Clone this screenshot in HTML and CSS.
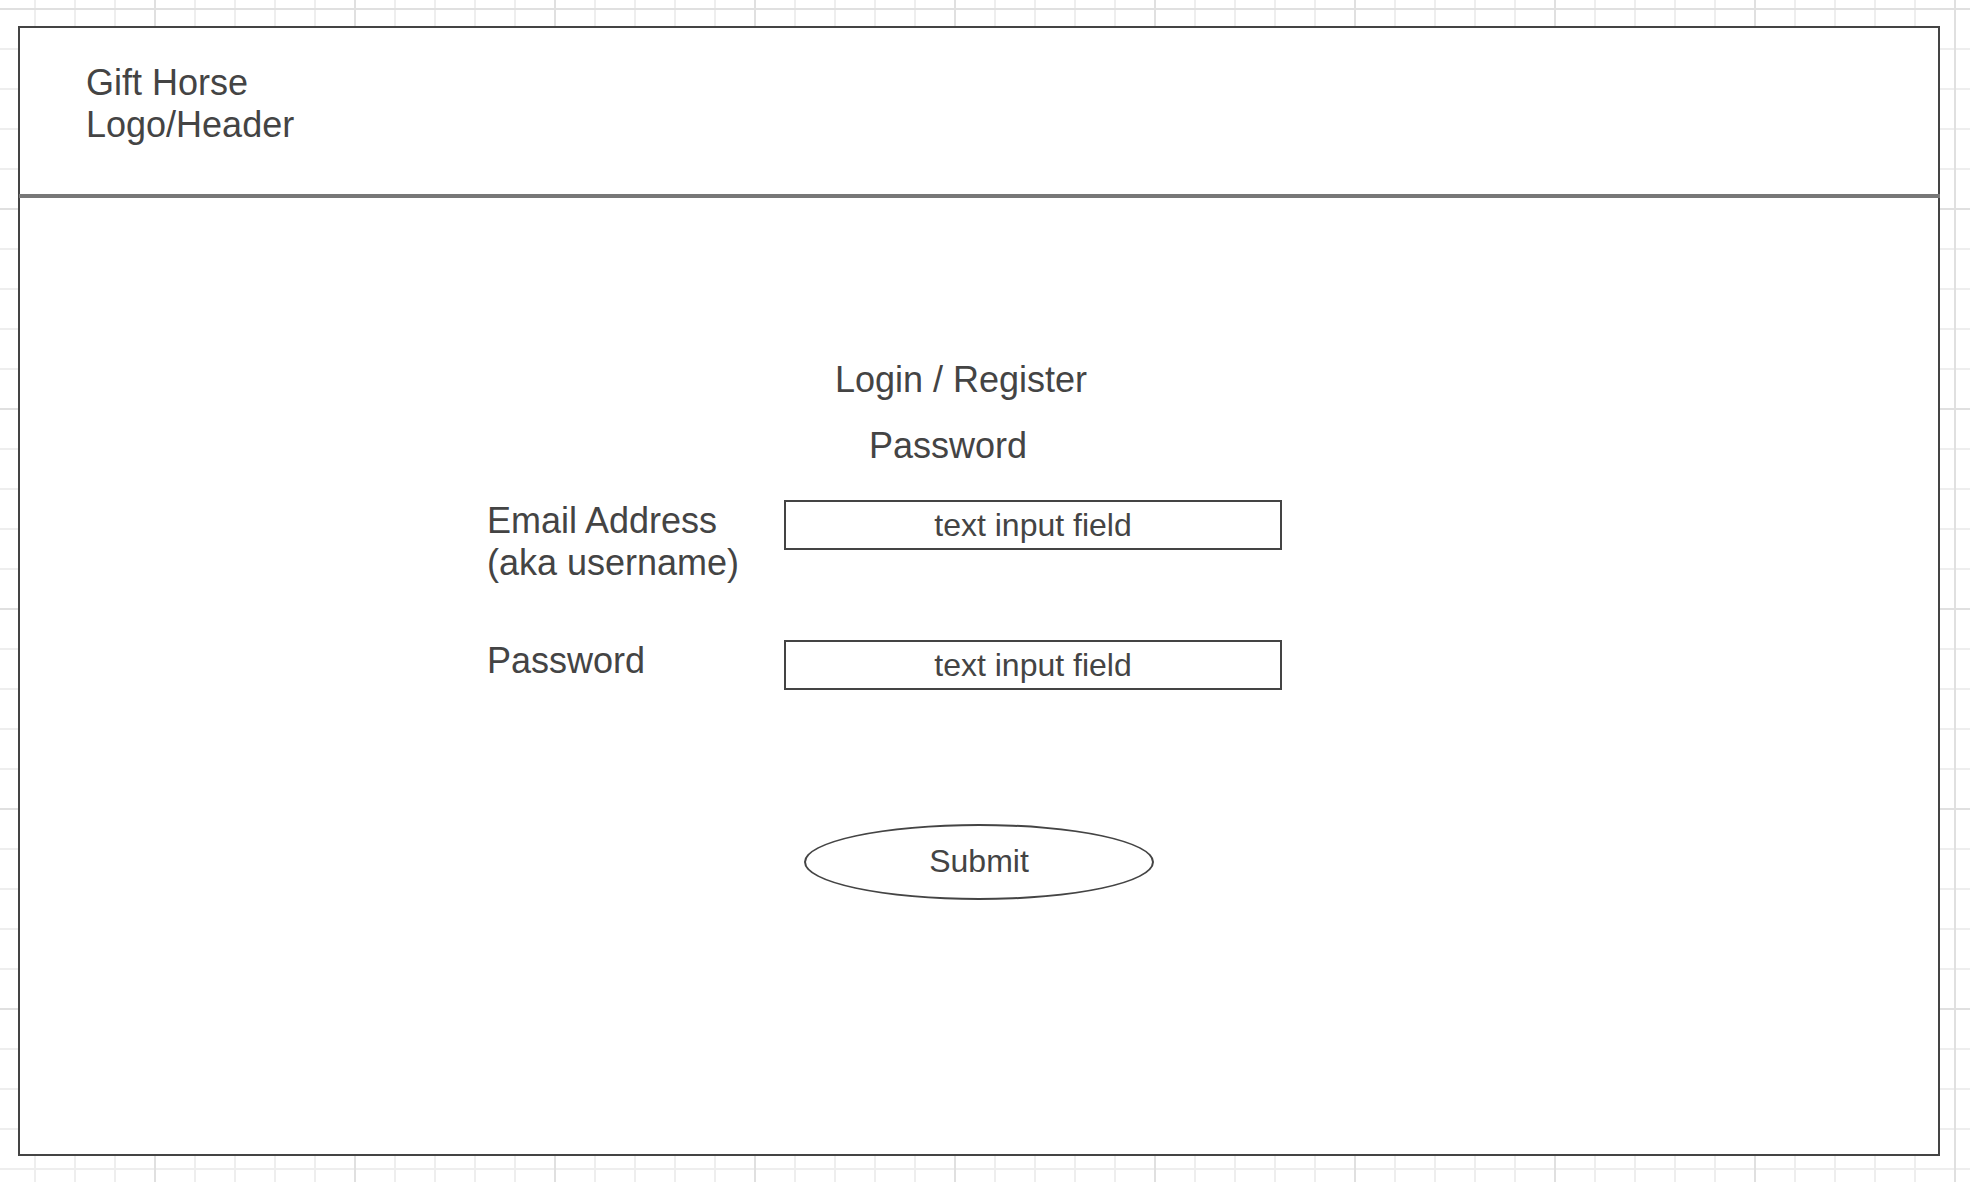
FILE: index.html
```html
<!DOCTYPE html>
<html lang="en">
<head>
<meta charset="utf-8">
<meta name="viewport" content="width=device-width, initial-scale=1">
<title>Gift Horse - Login / Register</title>
<link rel="stylesheet" href="styles.css">
</head>
<body>
<div class="frame">
  <header class="header">
    <div class="logo">Gift Horse<br>Logo/Header</div>
  </header>
  <main class="main">
    <h1 class="title">Login / Register</h1>
    <h2 class="subtitle">Password</h2>
    <form class="form">
      <div class="fields">
        <label class="label" for="email">Email Address<br>(aka username)</label>
        <input class="field" id="email" type="text" placeholder="text input field">
        <label class="label" for="password">Password</label>
        <input class="field" id="password" type="password" placeholder="text input field">
      </div>
      <button class="submit" type="submit">Submit</button>
    </form>
  </main>
</div>
</body>
</html>
```
FILE: styles.css
```css
* {
  box-sizing: border-box;
}

body {
  margin: 0;
  min-height: 100vh;
  display: flex;
  padding: 26px 30px 26px 18px;
  color: #444;
  font-family: "Liberation Sans", Arial, sans-serif;
  font-size: 36px;
  line-height: 42px;
  background-color: #fff;
  /* graph paper: heavy lines every 200px, light lines every 40px */
  background-image:
    linear-gradient(90deg, #e0e0e0 2px, transparent 2px),
    linear-gradient(#e0e0e0 2px, transparent 2px),
    linear-gradient(90deg, #eee 2px, transparent 2px),
    linear-gradient(#eee 2px, transparent 2px);
  background-size: 200px 200px, 200px 200px, 40px 40px, 40px 40px;
  background-position: 154px 8px, 154px 8px, 34px 8px, 34px 8px;
}

.frame {
  flex: 1;
  min-width: 0;
  border: 2px solid #444;
  background: #fff;
}

.header {
  margin: 0 -2px 0 -1px;
  padding: 34px 67px 48px;
  border-bottom: 4px solid #777;
}

.main {
  display: flex;
  flex-direction: column;
  align-items: center;
  padding: 161px 24px 64px;
}

.title,
.subtitle {
  margin: 0;
  font-size: 36px;
  font-weight: normal;
}

.title {
  padding-right: 36px;
}

.subtitle {
  margin-top: 24px;
  padding-right: 62px;
}

.form {
  display: flex;
  flex-direction: column;
  align-items: center;
  margin-top: 33px;
}

.fields {
  display: grid;
  grid-template-columns: 257px minmax(0, 498px);
  gap: 56px 40px;
  align-items: start;
  margin-right: 189px;
}

.field {
  width: 100%;
  height: 50px;
  padding: 0 8px;
  border: 2px solid #444;
  border-radius: 0;
  background: #fff;
  color: #444;
  font-family: inherit;
  font-size: 32px;
  text-align: center;
}

.field::placeholder {
  color: #444;
  opacity: 1;
}

.submit {
  width: 350px;
  height: 76px;
  margin-top: 134px;
  padding: 0 0 2px;
  border: 2px solid #444;
  border-radius: 50%;
  background: #fff;
  color: #444;
  font-family: inherit;
  font-size: 32px;
}
```
